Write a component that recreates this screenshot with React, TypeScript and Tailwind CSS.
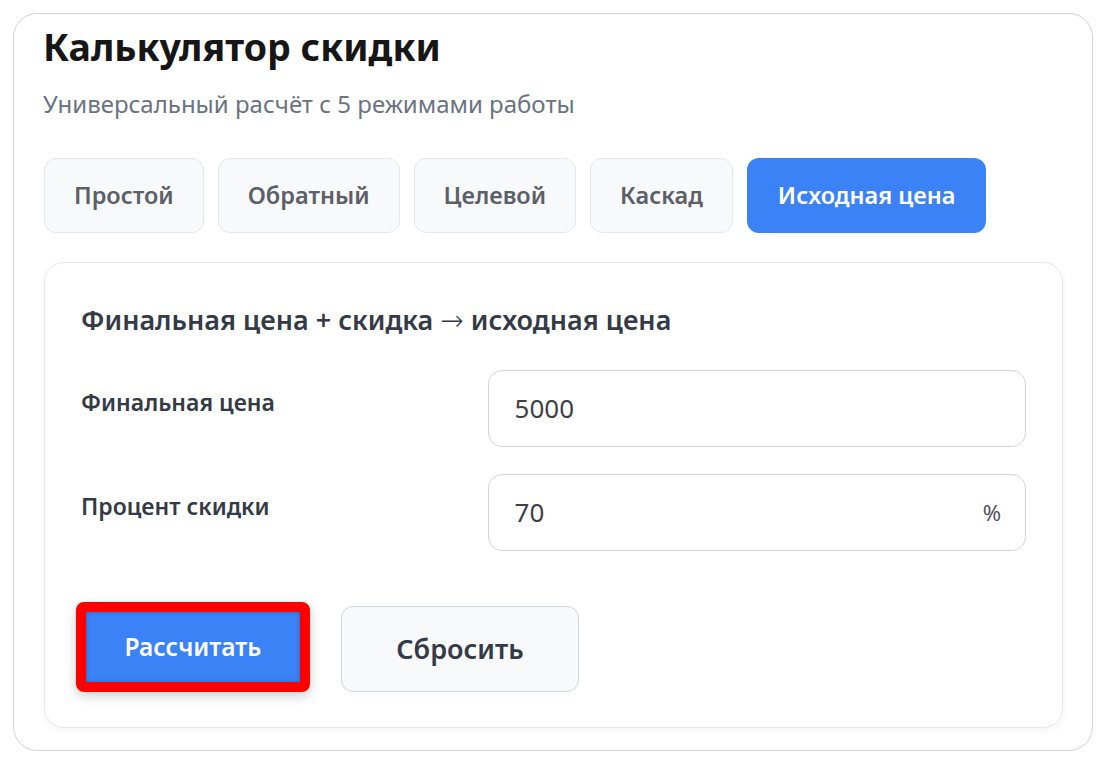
import React from "react";

const tabs = ["Простой", "Обратный", "Целевой", "Каскад", "Исходная цена"];

export default function App() {
  return (
    <div className="min-h-[762px] w-[1105px] bg-white pt-[13px] pl-[13px]" style={{ fontFamily: '"Noto Sans", "Open Sans", sans-serif' }}>
      <div className="w-[1080px] h-[738px] rounded-[24px] border border-[#d4d4d8] px-[30px] pt-[8px]">
        <h1 className="-ml-[1px] text-[37.5px] leading-[50px] font-bold text-[#161616]">Калькулятор скидки</h1>
        <p className="mt-[16px] -ml-[1px] text-[24px] leading-[32px] text-[#6b7280]">Универсальный расчёт с 5 режимами работы</p>
        <div className="mt-[38px] flex gap-[14px]">
          {tabs.map((t, i) => (
            <div
              key={t}
              className={
                i === 4
                  ? "h-[75px] px-[31px] flex items-center rounded-[12px] bg-[#3b82f6] text-white text-[23.5px] font-semibold"
                  : "h-[75px] px-[29px] flex items-center rounded-[12px] bg-[#f8f9fa] border border-[#e5e7eb] text-[#5b6068] text-[23.5px] font-semibold"
              }
            >
              {t}
            </div>
          ))}
        </div>
        <div className="mt-[29px] w-[1019px] h-[466px] rounded-[20px] border border-[#e5e7eb] shadow-[0_2px_8px_rgba(0,0,0,0.05)] px-[36px] pt-[40px]">
          <h2 className="text-[27px] leading-[34px] font-semibold text-[#343a46]">
            Финальная цена + скидка{" "}
            <span className="font-light" style={{ fontFamily: '"DejaVu Sans", sans-serif', fontSize: "28px" }}>→</span>{" "}
            исходная цена
          </h2>
          <div className="mt-[32px] flex flex-col gap-[27px]">
            <div className="flex items-start">
              <div className="w-[407px] pt-[17px] text-[23px] leading-[30px] font-semibold text-[#343a46]">Финальная цена</div>
              <div className="w-[539px] h-[77px] rounded-[14px] border border-[#d1d5db] flex items-center pl-[26px] pr-[24px] text-[26px] text-[#3f3f46]">
                5000
              </div>
            </div>
            <div className="flex items-start">
              <div className="w-[407px] pt-[17px] text-[23px] leading-[30px] font-semibold text-[#343a46]">Процент скидки</div>
              <div className="w-[539px] h-[77px] rounded-[14px] border border-[#d1d5db] flex items-center justify-between pl-[26px] pr-[24px] text-[26px] text-[#3f3f46]">
                <span>70</span>
                <span className="text-[22px] text-[#52525b]">%</span>
              </div>
            </div>
          </div>
          <div className="mt-[51px] flex items-end gap-[31px] -ml-[5px]">
            <div className="w-[234px] h-[90px] rounded-[8px] border-[10px] border-[#ff0000] shadow-[0_4px_12px_rgba(0,0,0,0.2)]">
              <div className="w-full h-full bg-[#3b82f6] shadow-[inset_0_0_4px_rgba(0,0,0,0.25)] flex items-center justify-center text-white text-[24.5px] font-semibold">
                Рассчитать
              </div>
            </div>
            <div className="w-[238px] h-[86px] rounded-[12px] border border-[#d1d5db] bg-[#f8f9fa] flex items-center justify-center text-[27px] font-semibold text-[#343a46]">
              Сбросить
            </div>
          </div>
        </div>
      </div>
    </div>
  );
}
